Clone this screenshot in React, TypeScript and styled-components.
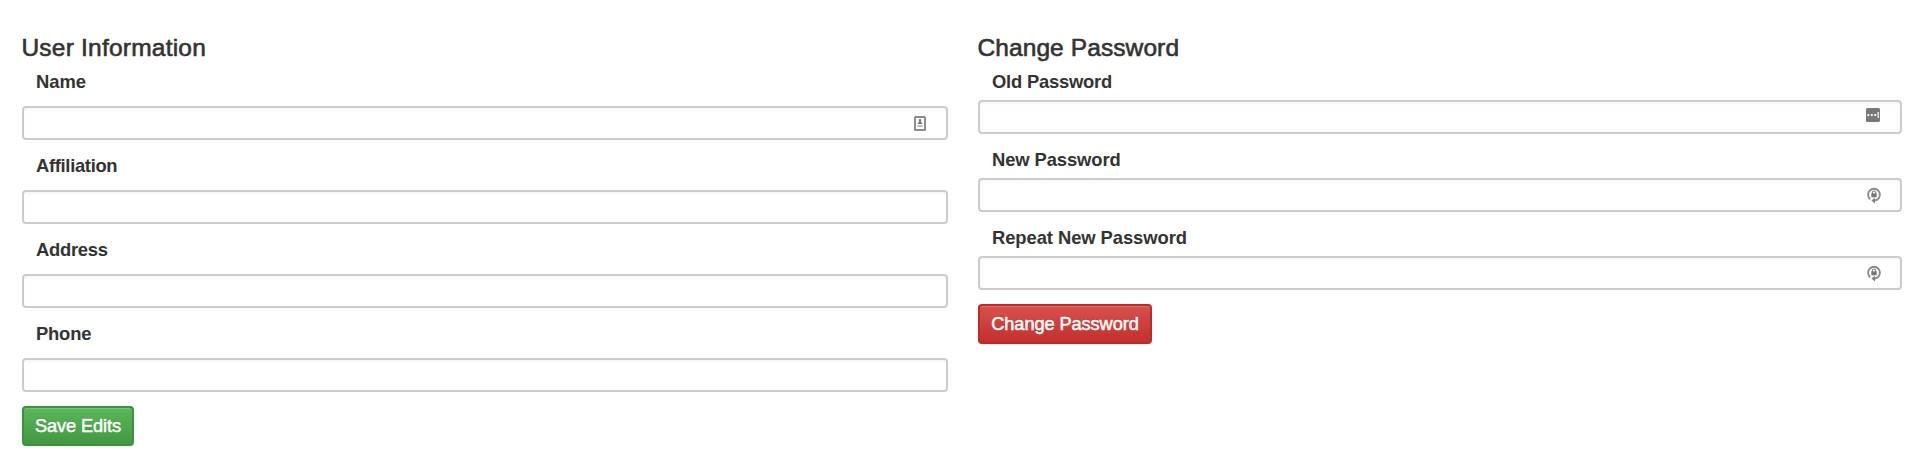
import React from "react";
import styled, { createGlobalStyle } from "styled-components";

const GlobalStyle = createGlobalStyle`
  * { box-sizing: border-box; }
  body {
    margin: 0;
    background: #fff;
    color: #333;
    font-family: "Liberation Sans", Arial, sans-serif;
  }
`;

const Page = styled.main`
  display: grid;
  grid-template-columns: 926px 924px;
  column-gap: 30px;
  align-items: start;
  padding: 28px 0 0 22px;
  height: 454px;
`;

const Panel = styled.form`
  display: flex;
  flex-direction: column;
  align-items: stretch;
`;

const Heading = styled.h2<{ $tracking: number }>`
  margin: 0 0 0 -0.6px;
  font-size: 24.5px;
  line-height: 40px;
  font-weight: 400;
  letter-spacing: ${(p) => p.$tracking}px;
  -webkit-text-stroke: 0.6px #333;
`;

const Field = styled.div<{ $gap: number }>`
  display: flex;
  flex-direction: column;
  gap: ${(p) => p.$gap}px;
  margin-bottom: 12px;
`;

const Label = styled.label<{ $tracking: number }>`
  padding-left: 14px;
  font-size: 18.4px;
  line-height: 28px;
  font-weight: 700;
  letter-spacing: ${(p) => p.$tracking}px;
`;

const InputFrame = styled.div`
  display: flex;
  align-items: flex-start;
  height: 34px;
  border: 2px solid #ccc;
  border-radius: 4px;
  background: #fff;
  box-shadow: inset 0 2px 2px rgba(0, 0, 0, 0.035);
`;

const Input = styled.input`
  flex: 1;
  min-width: 0;
  height: 30px;
  padding: 0 10px;
  border: 0;
  outline: 0;
  background: transparent;
  font: 18px "Liberation Sans", Arial, sans-serif;
  color: #555;
`;

const IconSlot = styled.span<{ $top: number; $right: number }>`
  display: flex;
  flex: none;
  margin: ${(p) => p.$top}px ${(p) => p.$right}px 0 0;
`;

const Button = styled.button<{ $top: string; $bottom: string; $edge: string; $width: number }>`
  align-self: flex-start;
  width: ${(p) => p.$width}px;
  height: 40px;
  margin-top: 2px;
  padding: 0 0 1px;
  border: 2px solid ${(p) => p.$edge};
  border-radius: 4px;
  background: linear-gradient(${(p) => p.$top}, ${(p) => p.$bottom}) border-box;
  box-shadow: inset 0 1px 0 rgba(255, 255, 255, 0.18), 0 1px 2px rgba(0, 0, 0, 0.08);
  color: #fff;
  font: 18.2px/34px "Liberation Sans", Arial, sans-serif;
  letter-spacing: -0.08px;
  white-space: nowrap;
  text-shadow: 0 -1px 0 rgba(0, 0, 0, 0.2);
  -webkit-text-stroke: 0.5px #fff;
`;

const ContactIcon = () => (
  <svg width="12" height="15" viewBox="0 0 12 15">
    <rect x="1" y="1" width="10" height="13" rx="0.6" fill="#fff" stroke="#8b8b8b" strokeWidth="2" />
    <circle cx="6" cy="4.4" r="1.3" fill="#777" />
    <path d="M3.8 8V7.2Q4 5.4 6 5.4T8.2 7.2V8Z" fill="#777" />
    <path d="M3.4 10h5.2" stroke="#aaa" strokeWidth="1.6" />
  </svg>
);

const PasswordIcon = () => (
  <svg width="14" height="14" viewBox="0 0 14 14">
    <rect width="14" height="14" rx="1.6" fill="#777" />
    <path d="M1.3 6h2v2h-2zM4.8 6h2v2h-2zM8.2 6h2v2h-2z" fill="#eee" />
    <path d="M12.2 4v6" stroke="#eee" strokeWidth="1.4" />
  </svg>
);

const RenewIcon = () => (
  <svg width="14" height="17" viewBox="0 0 14 17">
    <path d="M3.2 12.2A5.9 5.9 0 1 1 10.8 12.2Q9.6 13.3 7.4 13.5" fill="none" stroke="#8b8b8b" strokeWidth="1.9" />
    <path d="M8 10.7v5.8L4.4 13.6Z" fill="#808080" />
    <path d="M5.4 7V5.6a1.6 1.6 0 0 1 3.2 0V7" fill="none" stroke="#888" strokeWidth="1.2" />
    <rect x="4.3" y="6.4" width="5.4" height="3.9" fill="#777" />
  </svg>
);

type FieldSpec = {
  label: string;
  tracking: number;
  type?: string;
  icon?: React.ReactNode;
  top?: number;
  right?: number;
};

const infoFields: FieldSpec[] = [
  { label: "Name", tracking: 0, icon: <ContactIcon />, top: 8, right: 20 },
  { label: "Affiliation", tracking: -0.32 },
  { label: "Address", tracking: -0.28 },
  { label: "Phone", tracking: -0.2 },
];

const passwordFields: FieldSpec[] = [
  { label: "Old Password", tracking: -0.22, type: "password", icon: <PasswordIcon />, top: 6, right: 20 },
  { label: "New Password", tracking: -0.1, type: "password", icon: <RenewIcon />, top: 7, right: 19 },
  { label: "Repeat New Password", tracking: -0.07, type: "password", icon: <RenewIcon />, top: 7, right: 19 },
];

const Fields = ({ items, gap }: { items: FieldSpec[]; gap: number }) => (
  <>
    {items.map((f) => (
      <Field key={f.label} $gap={gap}>
        <Label htmlFor={f.label} $tracking={f.tracking}>
          {f.label}
        </Label>
        <InputFrame>
          <Input id={f.label} type={f.type ?? "text"} autoComplete="off" />
          {f.icon && (
            <IconSlot $top={f.top ?? 0} $right={f.right ?? 0}>
              {f.icon}
            </IconSlot>
          )}
        </InputFrame>
      </Field>
    ))}
  </>
);

export default function App() {
  return (
    <>
      <GlobalStyle />
      <Page>
        <Panel>
          <Heading $tracking={0.22}>User Information</Heading>
          <Fields items={infoFields} gap={10} />
          <Button type="button" $top="#5cb85c" $bottom="#419641" $edge="#3e8f3e" $width={112}>
            Save Edits
          </Button>
        </Panel>
        <Panel>
          <Heading $tracking={0.1}>Change Password</Heading>
          <Fields items={passwordFields} gap={4} />
          <Button type="button" $top="#d9534f" $bottom="#c12e2a" $edge="#b92c28" $width={174}>
            Change Password
          </Button>
        </Panel>
      </Page>
    </>
  );
}
